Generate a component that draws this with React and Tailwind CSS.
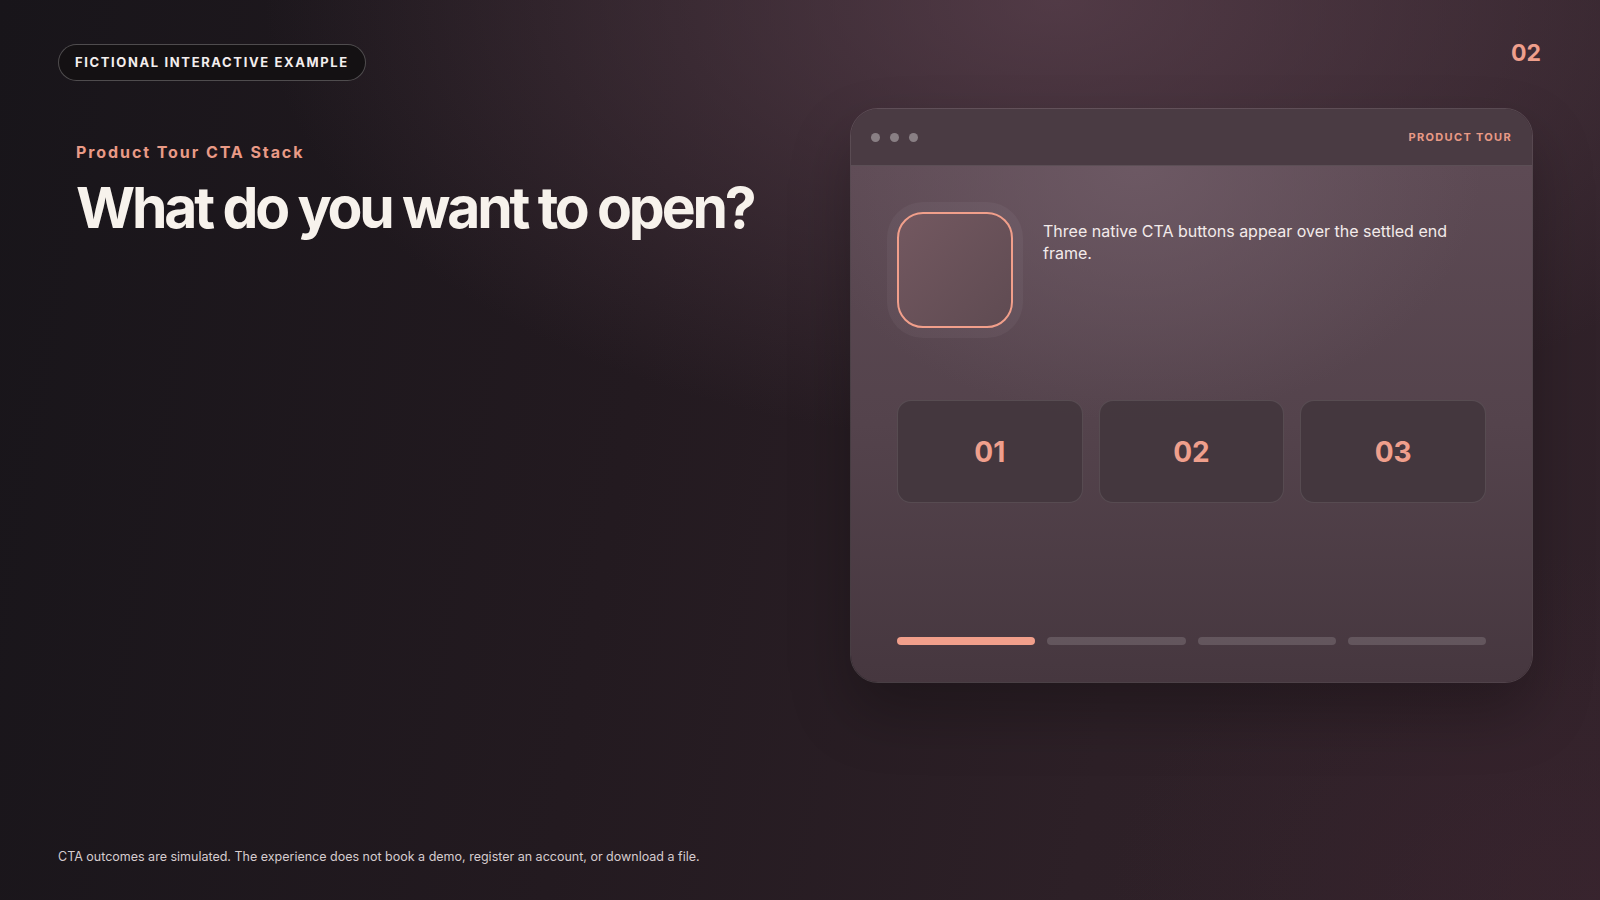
const bars = [true, false, false, false];
const ctas = ["01", "02", "03"];

export default function App() {
    return (
        <div
            className="relative w-[1600px] h-[900px] overflow-hidden flex flex-col px-[58px] pt-[44px] pb-[33px] text-[#f5efe9]"
            style={{
                fontFamily: "Inter, 'Liberation Sans', sans-serif",
                background:
                    "radial-gradient(ellipse 1100px 620px at 66% 0%, rgba(98,70,84,0.7), rgba(98,70,84,0) 72%), radial-gradient(ellipse 700px 500px at 100% 100%, rgba(64,38,50,0.45), rgba(64,38,50,0) 70%), linear-gradient(100deg, #18151a 0%, #231a20 40%, #2d2027 70%, #31222a 100%)",
            }}>
            {/* header */}
            <div className="flex items-start justify-between">
                <div className="h-[37px] flex items-center px-[16px] rounded-full border border-white/25 bg-[#141113]">
                    <span className="text-[13px] font-bold tracking-[0.125em] text-[#f3eeee]">FICTIONAL INTERACTIVE EXAMPLE</span>
                </div>
                <div className="-mt-[3px] text-[23px] font-bold text-[#ef9f8c] leading-[24px] mr-[1px]">02</div>
            </div>

            {/* main */}
            <div className="flex justify-between mt-[27px]">
                <div className="pl-[18px] pt-[35px]">
                    <div className="text-[16px] font-bold tracking-[0.12em] text-[#e99a86] leading-[19px]">Product Tour CTA Stack</div>
                    <h1 className="mt-[14px] text-[57px] font-bold tracking-[-0.055em] leading-[64px] text-[#f7f2ec]">What do you want to open?</h1>
                </div>

                <div className="w-[683px] h-[575px] mr-[9px] rounded-[28px] border border-white/15 overflow-hidden flex flex-col shadow-[0_30px_60px_rgba(0,0,0,0.25)]">
                    <div className="h-[57px] shrink-0 flex items-center justify-between px-[20px] bg-[#4a3b43] border-b border-white/10">
                        <div className="flex gap-[10px]">
                            <span className="w-[9px] h-[9px] rounded-full bg-white/35" />
                            <span className="w-[9px] h-[9px] rounded-full bg-white/35" />
                            <span className="w-[9px] h-[9px] rounded-full bg-white/35" />
                        </div>
                        <span className="text-[11px] font-bold tracking-[0.12em] text-[#e99a86]">PRODUCT TOUR</span>
                    </div>
                    <div
                        className="flex-1 flex flex-col px-[46px] pt-[46px] pb-[37px]"
                        style={{
                            background:
                                "radial-gradient(ellipse 460px 340px at 42% 0%, rgba(110,90,101,0.9), rgba(110,90,101,0) 75%), linear-gradient(180deg, #5d4a54 0%, #54434c 50%, #46373f 100%)",
                        }}>
                        <div className="flex items-start gap-[30px]">
                            <div className="w-[116px] h-[116px] shrink-0 rounded-[26px] border-2 border-[#f19f8b] bg-gradient-to-br from-[#735860] to-[#5f4b52] shadow-[0_0_0_10px_rgba(255,255,255,0.045)]" />
                            <p className="pt-[8px] text-[16px] leading-[22px] text-[#f3ebea]">
                                Three native CTA buttons appear over the settled end frame.
                            </p>
                        </div>

                        <div className="grid grid-cols-3 gap-4 mt-[72px]">
                            {ctas.map((c) => (
                                <button
                                    key={c}
                                    className="h-[103px] rounded-[14px] border border-white/10 bg-[#43363d]/90 flex items-center justify-center">
                                    <span className="text-[28px] font-bold text-[#ef9f8c]">{c}</span>
                                </button>
                            ))}
                        </div>

                        <div className="mt-auto grid grid-cols-4 gap-3">
                            {bars.map((on, i) => (
                                <div key={i} className={on ? "h-2 rounded-full bg-[#f19f8b]" : "h-2 rounded-full bg-white/15"} />
                            ))}
                        </div>
                    </div>
                </div>
            </div>

            <div className="mt-auto text-[12.5px] leading-[20px] text-[#d6cccf]">
                CTA outcomes are simulated. The experience does not book a demo, register an account, or download a file.
            </div>
        </div>
    );
}
